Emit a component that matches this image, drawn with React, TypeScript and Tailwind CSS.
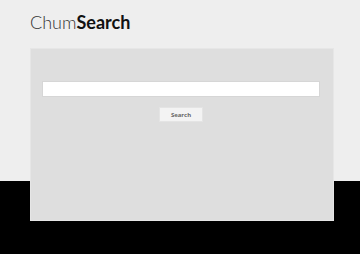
export default function App() {
  return (
    <div className="h-[254px] w-[360px] overflow-hidden bg-[linear-gradient(to_bottom,#eeeeee_181px,#000000_181px)] font-['Lato',sans-serif]">
      <div className="pl-[30px] pt-[11px] h-[48px] text-[18px] leading-[22px] text-[#111]">
        <span className="font-light text-[#333]">Chum</span>
        <span className="font-bold">Search</span>
      </div>
      <div className="ml-[30px] w-[304px] h-[173px] bg-[#dedede] border border-[#e6e6e6] pt-[32px] pl-[11px] pr-[13px] flex flex-col items-center">
        <input className="w-full h-[16px] bg-white border border-[#d6d6d6] outline-none" />
        <button className="mt-[10px] w-[44px] h-[15px] bg-[#f3f3f3] border border-[#e4e4e4] text-[6px] font-bold text-[#666] font-['Open_Sans',sans-serif] leading-none">
          Search
        </button>
      </div>
    </div>
  );
}
